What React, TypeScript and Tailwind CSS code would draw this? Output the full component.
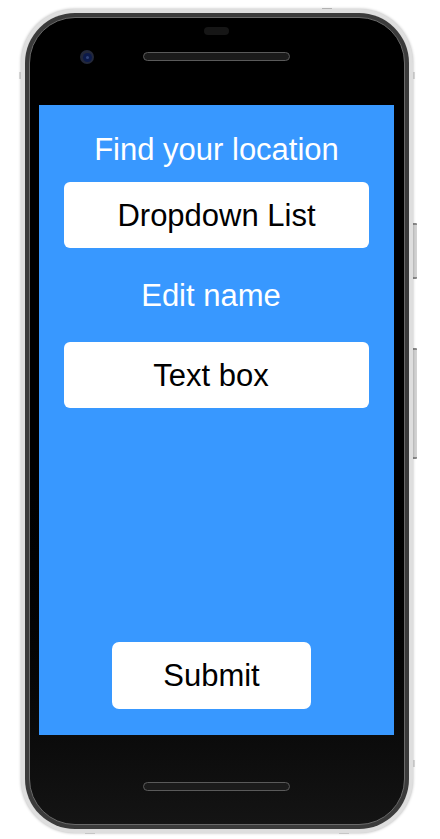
import React from "react";

const font = { fontFamily: '"Liberation Sans", Arial, sans-serif' };

export default function App() {
  return (
    <div className="w-[440px] h-[839px] bg-white pt-[9px] pl-[21px] relative" style={font}>
      {/* side buttons & nubs */}
      <div className="absolute left-[412px] top-[223px] w-[5px] h-[56px] bg-[#d2d2d2] border-y-2 border-[#8a8a8a] rounded-r-[1px]" />
      <div className="absolute left-[412px] top-[348px] w-[5px] h-[111px] bg-[#d2d2d2] border-y-2 border-[#8a8a8a] rounded-r-[1px]" />
      <div className="absolute left-[322px] top-[8px] w-[10px] h-[4px] bg-[#c8c8c8]" />
      <div className="absolute left-[85px] top-[830px] w-[10px] h-[4px] bg-[#dedede]" />
      <div className="absolute left-[339px] top-[830px] w-[10px] h-[4px] bg-[#dedede]" />
      <div className="absolute left-[19px] top-[72px] w-[4px] h-[7px] bg-[#dcdcdc]" />
      <div className="absolute left-[411px] top-[72px] w-[4px] h-[7px] bg-[#dcdcdc]" />
      <div className="absolute left-[411px] top-[760px] w-[4px] h-[7px] bg-[#dcdcdc]" />

      <div className="relative w-[392px] h-[824px] rounded-[54px] bg-[#dedede] p-[4px] shadow-[0_0_3px_rgba(0,0,0,0.3)]">
        <div className="h-full rounded-[50px] bg-[#3b3b3b] p-[4px]">
          <div className="h-full rounded-[46px] border border-[#6a6a6a] bg-gradient-to-b from-black via-black to-[#141414] flex flex-col pl-[9px] pr-[10px] overflow-hidden">
            {/* top bezel */}
            <div className="relative h-[87px] flex flex-col items-center">
              <div className="mt-[9px] w-[25px] h-[8px] rounded-full bg-[#161616]" />
              <div className="mt-[17px] w-[147px] h-[9px] rounded-full bg-[#1b1b1b] border border-[#5a5a5a]" />
              <div className="absolute left-[41px] top-[32px] w-[14px] h-[14px] rounded-full bg-[#23283a] flex items-center justify-center">
                <div className="w-[9px] h-[9px] rounded-full bg-[#0c1a4a] flex items-center justify-center">
                  <div className="w-[3px] h-[3px] rounded-full bg-[#31447a]" />
                </div>
              </div>
            </div>

            {/* screen */}
            <div className="h-[630px] bg-[#3898ff] flex flex-col items-center pt-[29px] pb-[26px]">
              <div className="text-white text-[31px] leading-none">Find your location</div>
              <div className="mt-[17px] w-[305px] h-[66px] rounded-[6px] bg-white flex items-center justify-center text-black text-[31px] leading-none">
                Dropdown List
              </div>
              <div className="mt-[32px] pr-[11px] text-white text-[31px] leading-none">Edit name</div>
              <div className="mt-[31px] w-[305px] h-[66px] rounded-[6px] bg-white flex items-center justify-center pr-[11px] text-black text-[31px] leading-none">
                Text box
              </div>
              <div className="mt-auto mr-[10px] w-[199px] h-[67px] rounded-[7px] bg-white flex items-center justify-center text-black text-[31px] leading-none">
                Submit
              </div>
            </div>

            {/* bottom bezel */}
            <div className="flex-1 flex flex-col items-center">
              <div className="mt-[47px] w-[147px] h-[9px] rounded-full bg-[#1b1b1b] border border-[#5a5a5a]" />
            </div>
          </div>
        </div>
      </div>
    </div>
  );
}
